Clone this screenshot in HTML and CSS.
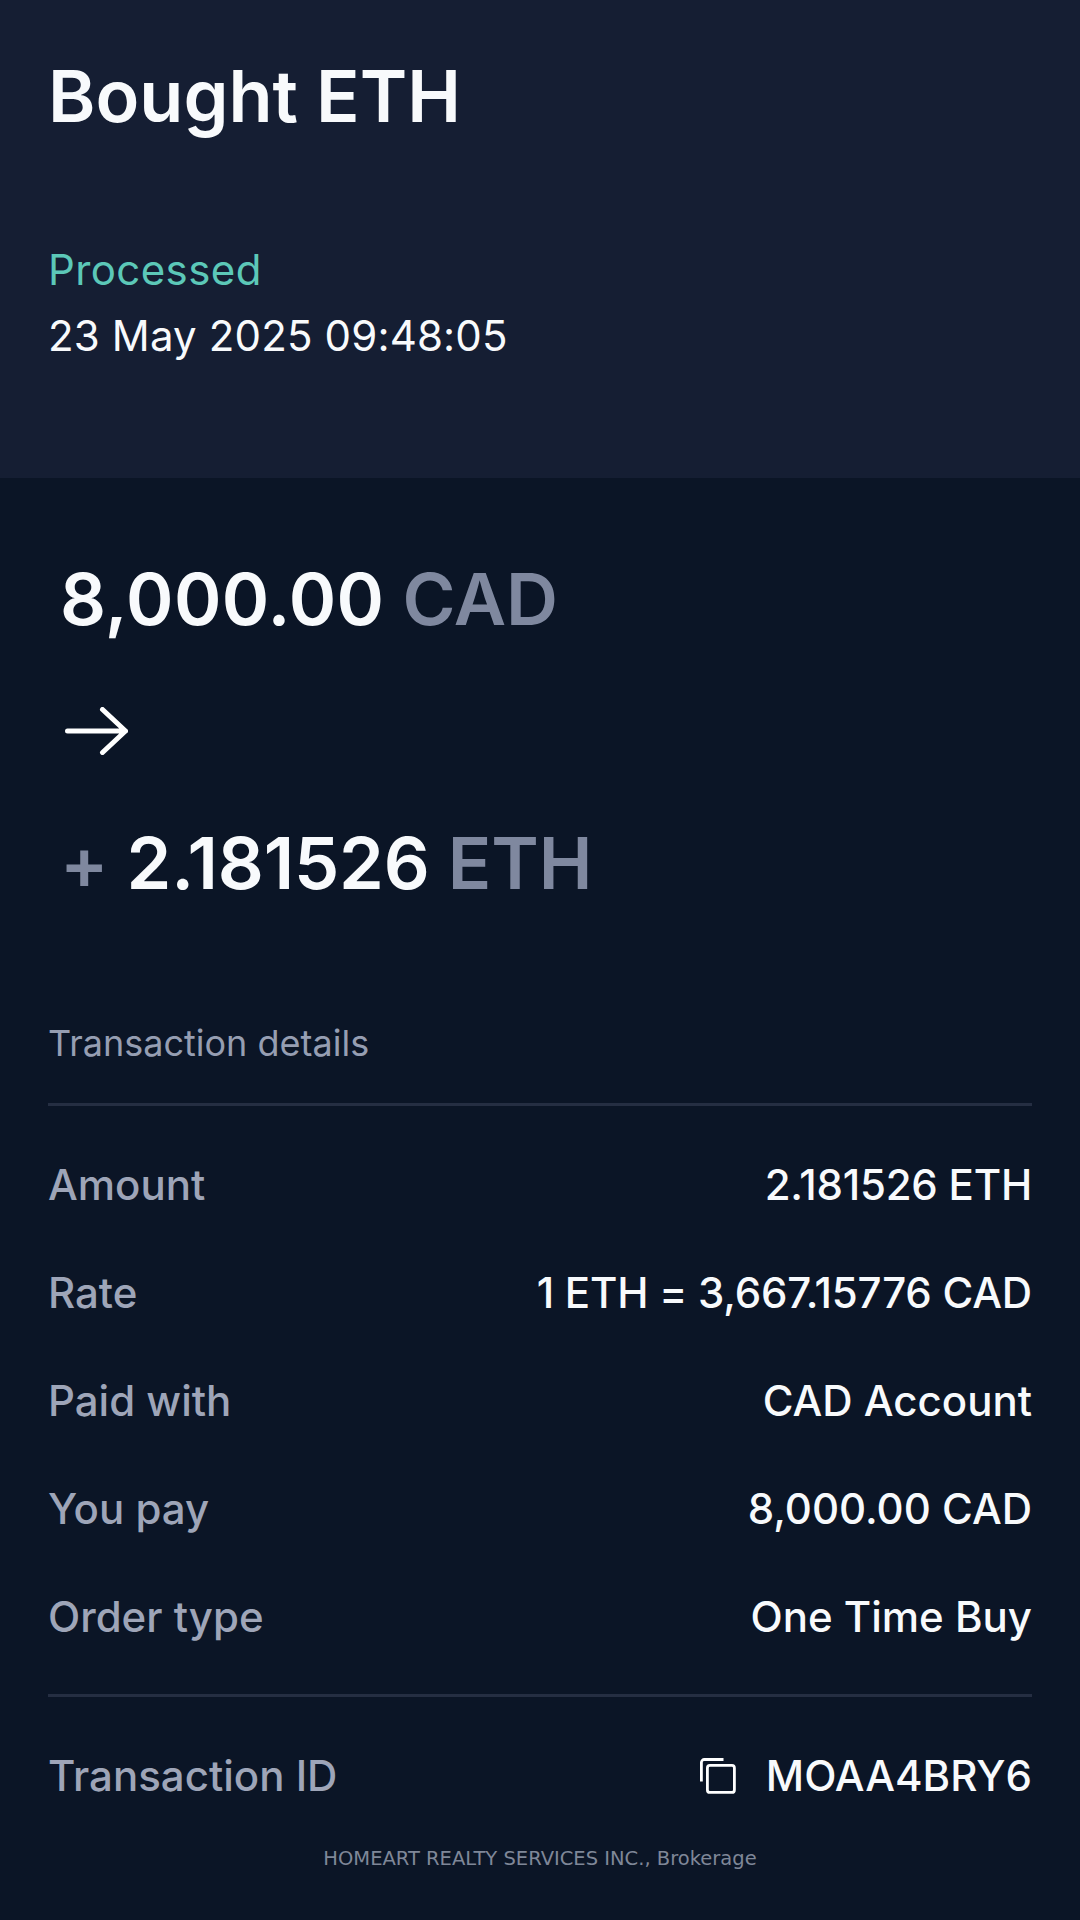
FILE: index.html
```html
<!DOCTYPE html>
<html lang="en">
<head>
<meta charset="utf-8">
<title>Bought ETH</title>
<link rel="stylesheet" href="styles.css">
</head>
<body>
<div class="page">
  <header class="head">
    <h1 class="title">Bought ETH</h1>
    <div class="status">Processed</div>
    <div class="date">23 May 2025 09:48:05</div>
  </header>
  <main class="main">
    <section class="amounts">
      <div class="amount"><span class="wide">8,000.00</span> <span class="cur">CAD</span></div>
      <svg class="arrow" width="64" height="48" viewBox="0 0 64 48" fill="none" stroke="#fff" stroke-width="5" stroke-linecap="round" stroke-linejoin="round"><path d="M3.500 24H61.500M38.500 2.500L61.500 24L38.500 45.500"/></svg>
      <div class="amount"><span class="plus">+</span> <span class="tight">2.181526</span> <span class="cur">ETH</span></div>
    </section>
    <section class="details">
      <div class="sec">Transaction details</div>
      <div class="rows">
        <div class="row"><span class="k">Amount</span><span class="v tight">2.181526 ETH</span></div>
        <div class="row"><span class="k">Rate</span><span class="v tight">1 ETH = 3,667.15776 CAD</span></div>
        <div class="row"><span class="k">Paid with</span><span class="v">CAD Account</span></div>
        <div class="row"><span class="k">You pay</span><span class="v">8,000.00 CAD</span></div>
        <div class="row"><span class="k">Order type</span><span class="v">One Time Buy</span></div>
      </div>
      <div class="row idrow"><span class="k">Transaction ID</span><span class="v idv"><svg class="copy" width="36" height="36" viewBox="0 0 36 36" fill="none" stroke="#fff" stroke-width="2.800"><rect x="7.400" y="7.400" width="27" height="27" rx="2.500"/><path d="M1.400 23.500V4.500A3 3 0 0 1 4.400 1.500H23.500"/></svg><span>MOAA4BRY6</span></span></div>
    </section>
    <footer class="foot">HOMEART REALTY SERVICES INC., Brokerage</footer>
  </main>
</div>
</body>
</html>
```
FILE: styles.css
```css
* { box-sizing: border-box; }
html, body { margin: 0; padding: 0; }
body { background: #0b1526; font-family: Inter, "Liberation Sans", sans-serif; color: #f8fafc; }
.page { width: 1080px; height: 1920px; overflow: hidden; display: flex; flex-direction: column; }
.head { height: 478px; background: #151e33; padding: 52px 48px 0; }
.title { margin: 0; font-size: 72px; line-height: 88px; font-weight: 600; color: #f8fafc; }
.status { margin-top: 106px; font-size: 42px; line-height: 48px; letter-spacing: 0.4px; color: #5cc8b8; }
.date { margin-top: 18px; font-size: 42px; line-height: 48px; letter-spacing: 0.15px; color: #f8fafc; }
.main { flex: 1; padding: 0 48px; display: flex; flex-direction: column; }
.amounts { padding: 77px 12px 0; }
.amount { font-size: 72px; line-height: 88px; font-weight: 600; color: #f8fafc; white-space: pre; }
.wide { letter-spacing: 0.3px; }
.tight { letter-spacing: -0.2px; }
.cur, .plus { color: #7f889f; }
.arrow { display: block; margin: 64px 0 64px 4px; }
.details { margin-top: 114px; }
.sec { font-size: 36px; line-height: 44px; color: #969eb2; padding-bottom: 38px; border-bottom: 3px solid #252e42; }
.rows { padding: 55px 0 53px; border-bottom: 3px solid #252e42; display: flex; flex-direction: column; gap: 60px; }
.row { display: flex; justify-content: space-between; align-items: center; font-size: 42px; line-height: 48px; font-weight: 500; }
.k { color: #9ea5b8; }
.v { color: #f8fafc; }
.idrow { margin-top: 55px; }
.idv { display: flex; align-items: center; gap: 30px; }
.copy { display: block; }
.foot { margin-top: 45px; text-align: center; font-family: "DejaVu Sans", sans-serif; font-size: 19.500px; line-height: 28px; color: #7f8798; }
```
